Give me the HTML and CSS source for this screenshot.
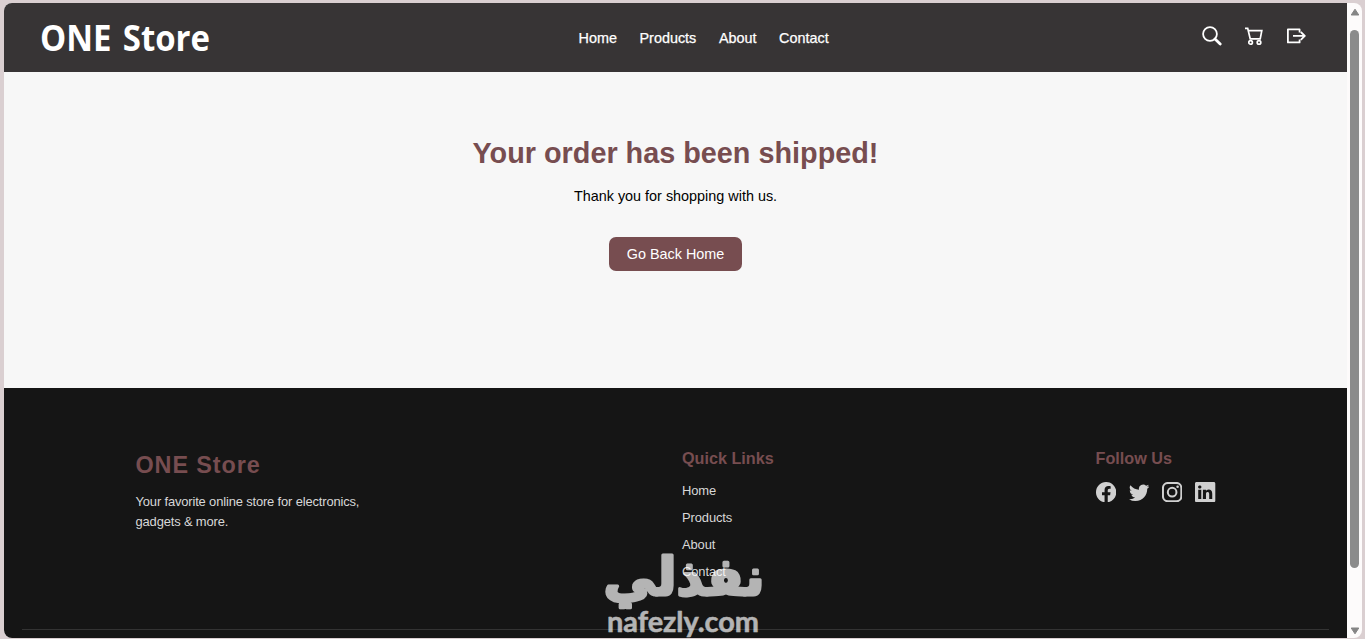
FILE: index.html
```
<!DOCTYPE html>
<html lang="en">
<head>
  <meta charset="UTF-8">
  <title>ONE Store</title>
  <link rel="stylesheet" href="styles.css">
</head>
<body>
  <div class="window">
    <div class="page">

      <header class="header">
        <a class="logo">ONE Store</a>
        <nav class="nav">
          <a>Home</a>
          <a>Products</a>
          <a>About</a>
          <a>Contact</a>
        </nav>
        <div class="icons">
          <svg width="20" height="20" viewBox="0 0 20 20" fill="none" stroke="currentColor">
            <circle cx="8" cy="8" r="6.9" stroke-width="1.8"/>
            <path d="M13 13l5.2 5" stroke-width="2.8" stroke-linecap="round"/>
          </svg>
          <svg width="20" height="20" viewBox="0 0 20 20" fill="none" stroke="currentColor" stroke-width="1.7">
            <path d="M1 2.4h2.7l2.5 10.4h10L17.8 4.6H4.4"/>
            <circle cx="6.6" cy="16.4" r="1.8"/>
            <circle cx="15" cy="16.4" r="1.8"/>
          </svg>
          <svg width="20" height="20" viewBox="0 0 20 20" fill="none" stroke="currentColor" stroke-width="1.8" stroke-linejoin="round">
            <path d="M13.6 6.4V3.4H1.9v13h11.7v-3"/>
            <path d="M7 9.9h11.6M14.8 6l4 3.9-4 3.9"/>
          </svg>
        </div>
      </header>

      <main class="main">
        <h1>Your order has been shipped!</h1>
        <p>Thank you for shopping with us.</p>
        <a class="btn">Go Back Home</a>
      </main>

      <footer class="footer">
        <div class="footer-cols">
          <div class="footer-about">
            <h2>ONE Store</h2>
            <p>Your favorite online store for electronics, gadgets &amp; more.</p>
          </div>
          <div class="footer-links">
            <h3>Quick Links</h3>
            <ul>
              <li>Home</li>
              <li>Products</li>
              <li>About</li>
              <li>Contact</li>
            </ul>
          </div>
          <div class="footer-social">
            <h3>Follow Us</h3>
            <div class="social">
              <svg viewBox="0 0 16 16"><path d="M16 8.049c0-4.446-3.582-8.05-8-8.05C3.58 0-.002 3.603-.002 8.05c0 4.017 2.926 7.347 6.75 7.951v-5.625h-2.03V8.05H6.75V6.275c0-2.017 1.195-3.131 3.022-3.131.876 0 1.791.157 1.791.157v1.98h-1.009c-.993 0-1.303.621-1.303 1.258v1.51h2.218l-.354 2.326H9.25V16c3.824-.604 6.75-3.934 6.75-7.951z"/></svg>
              <svg viewBox="0 0 16 16"><path d="M5.026 15c6.038 0 9.341-5.003 9.341-9.334 0-.14 0-.282-.006-.422A6.685 6.685 0 0 0 16 3.542a6.658 6.658 0 0 1-1.889.518 3.301 3.301 0 0 0 1.447-1.817 6.533 6.533 0 0 1-2.087.793A3.286 3.286 0 0 0 7.875 6.03a9.325 9.325 0 0 1-6.767-3.429 3.289 3.289 0 0 0 1.018 4.382A3.323 3.323 0 0 1 .64 6.575v.045a3.288 3.288 0 0 0 2.632 3.218 3.203 3.203 0 0 1-.865.115 3.23 3.23 0 0 1-.614-.057 3.283 3.283 0 0 0 3.067 2.277A6.588 6.588 0 0 1 .78 13.58a6.32 6.32 0 0 1-.78-.045A9.344 9.344 0 0 0 5.026 15z"/></svg>
              <svg viewBox="0 0 16 16">
                <rect class="line" x=".75" y=".75" width="14.5" height="14.5" rx="4"/>
                <circle class="line" cx="8" cy="8" r="3.4"/>
                <circle cx="12.3" cy="3.7" r="1"/>
              </svg>
              <svg viewBox="0 0 16 16"><path d="M0 1.146C0 .513.526 0 1.175 0h13.65C15.474 0 16 .513 16 1.146v13.708c0 .633-.526 1.146-1.175 1.146H1.175C.526 16 0 15.487 0 14.854V1.146zm4.943 12.248V6.169H2.542v7.225h2.401zm-1.2-8.212c.837 0 1.358-.554 1.358-1.248-.015-.709-.52-1.248-1.342-1.248-.822 0-1.359.54-1.359 1.248 0 .694.521 1.248 1.327 1.248h.016zm4.908 8.212V9.359c0-.216.016-.432.08-.586.173-.431.568-.878 1.232-.878.869 0 1.216.662 1.216 1.634v3.865h2.401V9.25c0-2.22-1.184-3.252-2.764-3.252-1.274 0-1.845.7-2.165 1.193v.025h-.016l.016-.025V6.169h-2.4c.03.678 0 7.225 0 7.225h2.4z"/></svg>
            </div>
          </div>
        </div>
        <div class="footer-bottom"></div>
      </footer>
    </div>

    <div class="scrollbar">
      <svg width="10" height="8" viewBox="0 0 10 8"><path d="M5 1.2L8.8 7H1.2z"/></svg>
      <div class="thumb"></div>
      <svg width="10" height="8" viewBox="0 0 10 8"><path d="M5 6.8L8.8 1H1.2z"/></svg>
    </div>
  </div>

  <svg class="watermark" width="170" height="89" viewBox="0 0 170 89">
    <text class="wm-ar" x="84" y="45" text-anchor="middle" textLength="161" lengthAdjust="spacingAndGlyphs">نفذلي</text>
    <text class="wm-en" x="7" y="81.5" textLength="152" lengthAdjust="spacingAndGlyphs">nafezly.com</text>
  </svg>
</body>
</html>
```
FILE: styles.css
```
* {
  box-sizing: border-box;
  margin: 0;
  padding: 0;
}
body {
  height: 639px;
  padding: 3px 3px 1px 4px;
  background: #dacfd1;
  font-family: "Liberation Sans", Arial, sans-serif;
  overflow: hidden;
}
.window {
  display: flex;
  height: 635px;
  border-radius: 8px;
  overflow: hidden;
  background: #fdfbfb;
}
.page {
  display: flex;
  flex-direction: column;
  width: 1343px;
  background: #f7f7f7;
}

/* header */
.header {
  display: flex;
  align-items: center;
  height: 69px;
  padding: 0 41px 0 36px;
  background: #373435;
  color: #fff;
}
.logo {
  width: 538.5px;
  font-family: "Trebuchet MS", "Open Sans", sans-serif;
  font-size: 36px;
  font-weight: 700;
  line-height: 69px;
  word-spacing: 3px;
  transform: scaleX(0.915);
  transform-origin: left;
}
.nav {
  display: flex;
  gap: 22.6px;
  font-size: 14.4px;
  -webkit-text-stroke: 0.25px #fff;
}
.icons {
  display: flex;
  gap: 22px;
  margin-left: auto;
  margin-top: -3px;
}

/* order message */
.main {
  height: 316px;
  padding-top: 64px;
  text-align: center;
  font-size: 14.4px;
}
.main h1 {
  font-size: 28.8px;
  line-height: 34px;
  color: #774d50;
}
.main p {
  margin-top: 18px;
  line-height: 17px;
}
.btn {
  display: inline-block;
  margin-top: 32px;
  padding: 0 18px;
  line-height: 34px;
  border-radius: 7px;
  background: #774d50;
  color: #fff;
}

/* footer */
.footer {
  flex: 1;
  padding: 61px 18px 0;
  background: #151515;
  color: #d8d8d8;
  font-size: 12.96px;
}
.footer-cols {
  display: grid;
  grid-template-columns: 546.5px 413.5px 1fr;
  height: 180px;
  padding-left: 113.5px;
}
.footer h2,
.footer h3 {
  color: #774d50;
}
.footer h2 {
  font-size: 23.4px;
  line-height: 32px;
  letter-spacing: 0.9px;
}
.footer-about p {
  width: 234px;
  margin-top: 11px;
  line-height: 20px;
  letter-spacing: -0.16px;
}
.footer h3 {
  font-size: 16.2px;
  line-height: 19px;
}
.footer ul {
  list-style: none;
  margin-top: 9px;
}
.footer li {
  line-height: 27px;
  letter-spacing: -0.12px;
}
.social {
  display: flex;
  gap: 13px;
  margin-top: 14px;
}
.social svg {
  width: 20.3px;
  height: 20.3px;
  fill: #d0d0d0;
}
.social .line {
  fill: none;
  stroke: #d0d0d0;
  stroke-width: 1.6;
}
.footer-bottom {
  border-top: 1px solid #333;
}

/* scrollbar */
.scrollbar {
  display: flex;
  flex-direction: column;
  align-items: center;
  width: 15px;
  padding: 5px 0 3px;
}
.scrollbar svg {
  fill: #858585;
  stroke: #858585;
  stroke-linejoin: round;
}
.thumb {
  width: 9px;
  height: 538px;
  margin: 14px 0 auto;
  border-radius: 5px;
  background: #8b8b8b;
}

/* site mark over the page */
.watermark {
  position: absolute;
  left: 600px;
  top: 550px;
  fill: #fff;
  stroke: #fff;
  stroke-linejoin: round;
  opacity: 0.68;
}
.wm-ar {
  font: 700 52px "DejaVu Sans", sans-serif;
  stroke-width: 3px;
}
.wm-en {
  font: 700 29px Lato, sans-serif;
  stroke-width: 0.5px;
}
```
